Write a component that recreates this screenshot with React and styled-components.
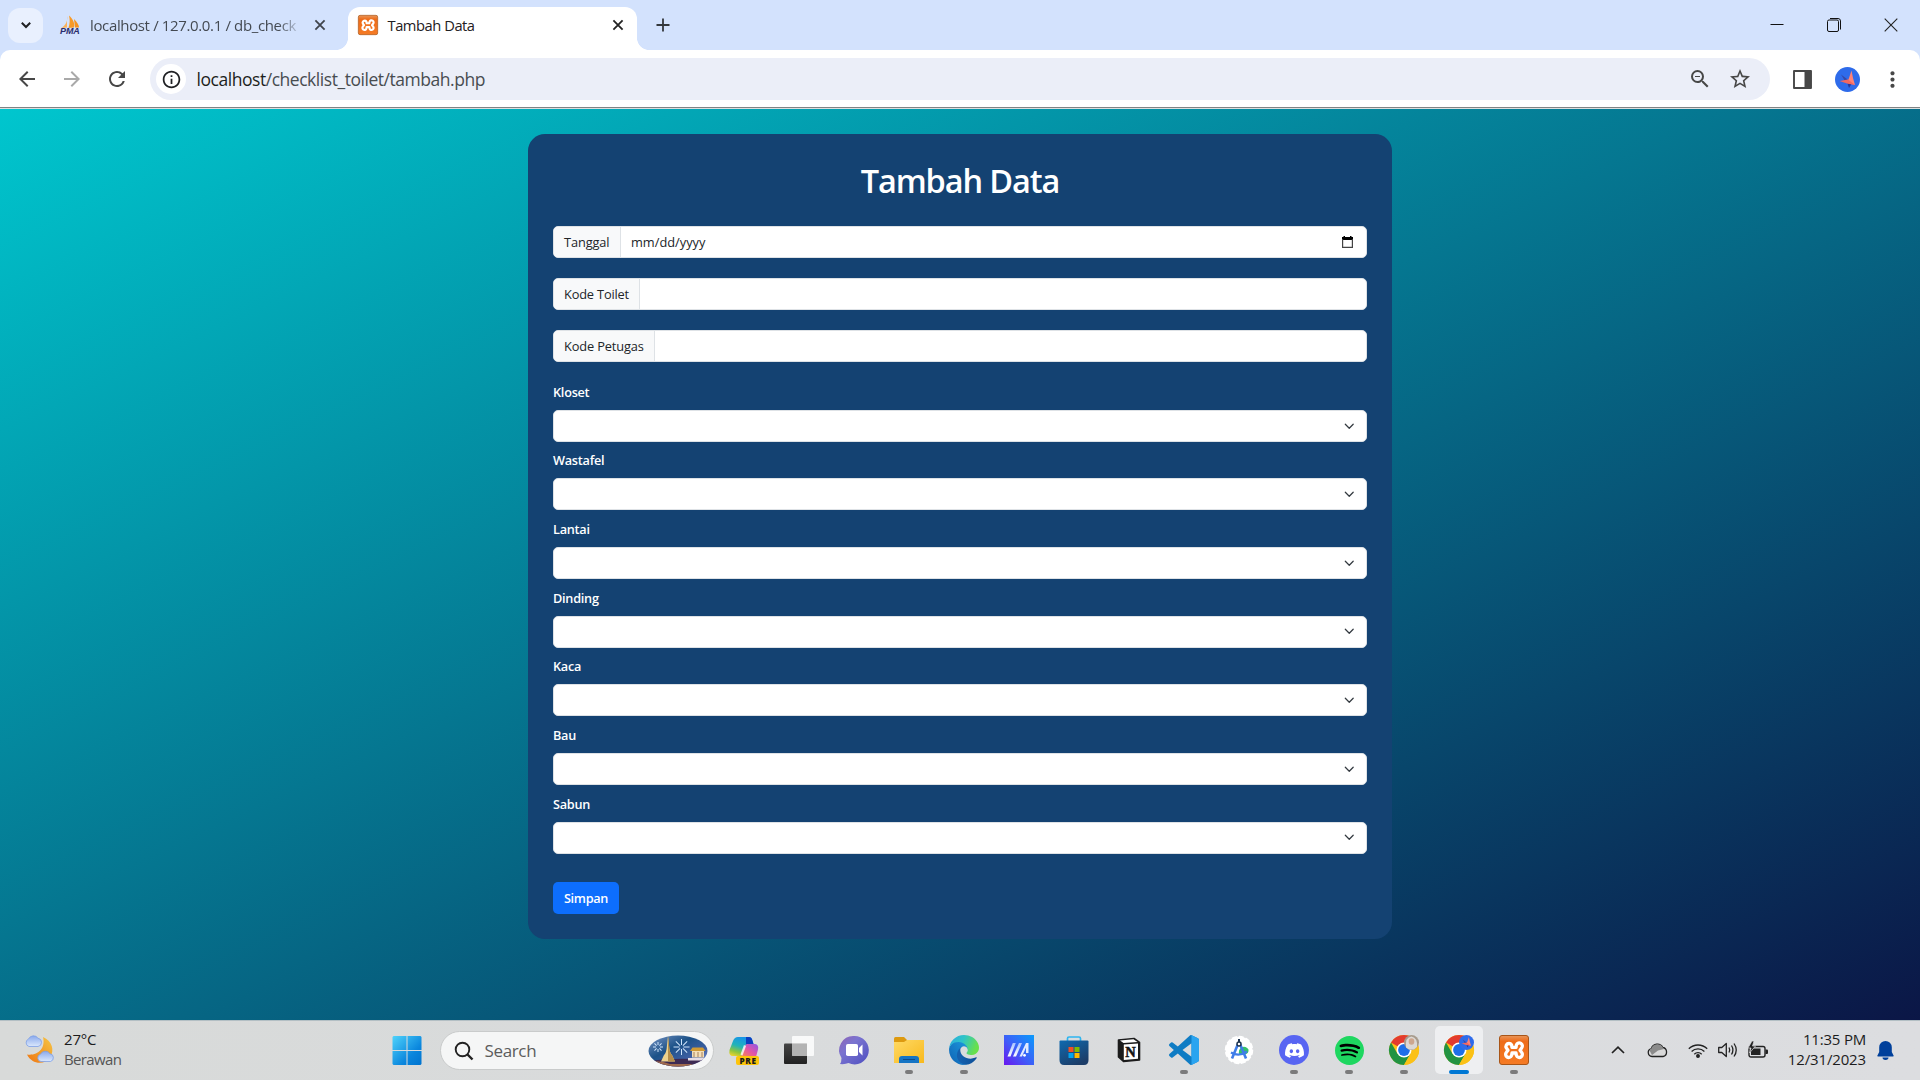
import React from "react";
import styled, { createGlobalStyle } from "styled-components";
import {
  MdArrowBack,
  MdArrowForward,
  MdRefresh,
  MdInfoOutline,
  MdZoomOut,
  MdStarBorder,
  MdMoreVert,
} from "react-icons/md";
import { SiDiscord, SiSpotify } from "react-icons/si";

const GlobalStyle = createGlobalStyle`
  * { box-sizing: border-box; }
  body { margin: 0; font-family: "Open Sans", "Noto Sans", sans-serif; }
  svg { display: block; flex: none; overflow: visible; }
`;

const Screen = styled.div`
  width: 1920px;
  height: 1080px;
  display: flex;
  flex-direction: column;
  overflow: hidden;
`;

/* ---------- browser chrome ---------- */
const TabStrip = styled.div`
  height: 50px;
  flex: none;
  display: flex;
  align-items: center;
  background: #d3e2fd;
  padding-left: 8px;
`;

const TabSearch = styled.div`
  width: 35px;
  height: 35px;
  border-radius: 12px;
  background: #e9f0fe;
  display: flex;
  align-items: center;
  justify-content: center;
`;

const Tab = styled.div`
  width: ${(p) => (p.$active ? 289 : 293)}px;
  height: ${(p) => (p.$active ? 43 : 50)}px;
  align-self: flex-end;
  display: flex;
  align-items: center;
  padding: ${(p) => (p.$active ? "0 13px 7px 10px" : "0 0 0 17px")};
  background: ${(p) => (p.$active ? "#fff" : "transparent")};
  border-radius: 12px 12px 0 0;
`;

const TabTitle = styled.div`
  margin-left: ${(p) => (p.$fade ? 10 : 9.5)}px;
  flex: none;
  width: ${(p) => p.$width}px;
  white-space: nowrap;
  font-size: ${(p) => (p.$fade ? 15 : 14.7)}px;
  line-height: 22px;
  letter-spacing: ${(p) => p.$spacing}px;
  color: ${(p) => (p.$fade ? "#444a52" : "#1f2023")};
  mask-image: ${(p) => (p.$fade ? "linear-gradient(90deg, #000 90%, rgba(0,0,0,.15))" : "none")};
`;

const TabClose = styled.div`
  margin-left: ${(p) => p.$gap}px;
  display: flex;
`;

const Spacer = styled.div`
  width: 12px;
  height: 12px;
`;

const Flare = styled.div`
  width: 12px;
  height: 12px;
  margin-left: ${(p) => (p.$left ? -12 : 0)}px;
  align-self: flex-end;
  background: radial-gradient(
    circle at ${(p) => (p.$left ? "0 0" : "100% 0")},
    transparent 11.6px,
    #fff 12.2px
  );
`;

const NewTab = styled.div`
  margin-left: 5.5px;
  display: flex;
`;

const WindowControls = styled.div`
  margin-left: auto;
  display: flex;
  align-items: center;
  gap: 43px;
  padding-right: 22px;
`;

const ToolbarBack = styled.div`
  flex: none;
  height: 59px;
  background: #d3e2fd;
  border-bottom: 1px solid #dcdfdf;
`;

const Toolbar = styled.div`
  height: 58px;
  background: #fff;
  border-radius: 10px 10px 0 0;
  border-bottom: 1px solid #808384;
  display: flex;
  align-items: center;
  padding: 1px 0 0 15px;
`;

const NavButtons = styled.div`
  display: flex;
  flex: none;
  gap: 21.2px;
  width: 135px;
  color: #474747;
`;

const NavIcon = styled.div`
  display: flex;
  justify-content: center;
  width: ${(p) => p.$width || p.$size || 24}px;
  font-size: ${(p) => p.$size || 24}px;
  color: ${(p) => (p.$muted ? "#a9a9a9" : "inherit")};
`;

const AddressBar = styled.div`
  width: 1620px;
  flex: none;
  height: 42px;
  border-radius: 21px;
  background: #ebeef8;
  display: flex;
  align-items: center;
  padding: 0 18px 0 6px;
`;

const SiteInfo = styled.div`
  width: 30px;
  height: 30px;
  border-radius: 50%;
  background: #fff;
  display: flex;
  align-items: center;
  justify-content: center;
  font-size: 21px;
  color: #1f2023;
`;

const Url = styled.div`
  flex: 1;
  margin-left: 10.5px;
  font-size: 17.5px;
  line-height: 24px;
  letter-spacing: -0.46px;
  color: #484c50;
  span { color: #1d1e20; }
`;

const AddressActions = styled.div`
  display: flex;
  gap: 16px;
  color: #474747;
`;

const ToolbarActions = styled.div`
  margin-left: 22.5px;
  flex: none;
  display: flex;
  align-items: center;
  gap: 23px;
  color: #474747;
`;

/* ---------- page ---------- */
const Page = styled.main`
  flex: none;
  height: 911px;
  padding-top: 25px;
  background: linear-gradient(to bottom right, #00c6ce 0%, #0b1646 100%);
`;

const Card = styled.section`
  width: 864px;
  height: 805px;
  margin: 0 auto;
  padding: 26px 25px 0;
  border-radius: 17px;
  background: #144272;
`;

const Title = styled.h1`
  margin: 0 0 24px;
  height: 42px;
  font-size: 32.5px;
  line-height: 42px;
  font-weight: 600;
  letter-spacing: -1.1px;
  text-align: center;
  color: #fff;
`;

const InputGroup = styled.div`
  display: flex;
  height: 32px;
  margin-bottom: 20px;
  border: 1px solid #dee2e6;
  border-radius: 5px;
  background: #fff;
  overflow: hidden;
`;

const Prefix = styled.label`
  width: ${(p) => p.$width}px;
  padding-left: 10px;
  border-right: 1px solid #dee2e6;
  background: #f8f9fa;
  font-size: 12.8px;
  line-height: 30px;
  letter-spacing: ${(p) => p.$spacing}px;
  white-space: nowrap;
  color: #212529;
`;

const FieldValue = styled.div`
  flex: 1;
  display: flex;
  align-items: center;
  justify-content: space-between;
  padding: 0 13px 0 10px;
  font-size: 12.8px;
  letter-spacing: 0;
  color: #212529;
`;

const SelectList = styled.div`
  padding-top: 0.8px;
`;

const SelectField = styled.div`
  height: 68.65px;
`;

const SelectLabel = styled.label`
  display: block;
  height: 27px;
  font-size: 12.7px;
  font-weight: 550;
  line-height: 19.4px;
  letter-spacing: -0.25px;
  color: #fff;
`;

const SelectBox = styled.div`
  height: 32px;
  border: 1px solid #dee2e6;
  border-radius: 5px;
  background: #fff;
  display: flex;
  align-items: center;
  justify-content: flex-end;
  padding-right: 11.5px;
`;

const SubmitButton = styled.button`
  margin-top: 18.6px;
  width: 66px;
  height: 32px;
  padding: 1px 0 0;
  border: 0;
  border-radius: 5px;
  background: #0d6efd;
  color: #fff;
  font-family: inherit;
  font-size: 12.7px;
  font-weight: 550;
  line-height: 19px;
  letter-spacing: -0.3px;
`;

/* ---------- taskbar ---------- */
const Taskbar = styled.footer`
  height: 60px;
  flex: none;
  display: flex;
  align-items: center;
  border-top: 1px solid #b3bfc4;
  background: linear-gradient(90deg, #d8dad9 0%, #d9dbdc 40%, #dcdde0 100%);
`;

const Weather = styled.div`
  width: 379.5px;
  padding: 0 0 2px 24px;
  display: flex;
  align-items: center;
  gap: 8px;
`;

const TwoLines = styled.div`
  padding-bottom: ${(p) => (p.$align ? 3 : 1)}px;
  font-size: 15px;
  line-height: 20px;
  color: #1c1c1c;
  text-align: ${(p) => p.$align || "left"};
`;

const Line = styled.div`
  letter-spacing: ${(p) => p.$spacing}px;
  color: ${(p) => (p.$muted ? "#555" : "inherit")};
`;

const SearchPill = styled.div`
  width: 274px;
  height: 39px;
  margin: 0 3px 0 5px;
  padding: 0 5px 0 13px;
  border: 1px solid #c9cbcb;
  border-radius: 20px;
  background: #f5f6f6;
  display: flex;
  align-items: center;
`;

const SearchText = styled.div`
  flex: 1;
  margin-left: 11px;
  font-size: 17px;
  letter-spacing: -0.35px;
  color: #5c5c5c;
`;

const AppCell = styled.div`
  width: 55px;
  height: 59px;
  display: flex;
  flex-direction: column;
  align-items: center;
`;

const AppTile = styled.div`
  width: 48px;
  height: 48px;
  margin-top: 5px;
  border-radius: 5px;
  display: flex;
  flex-direction: column;
  align-items: center;
  padding-top: 9px;
  background: ${(p) => (p.$active ? "#eeeff1" : "transparent")};
`;

const RunMark = styled.div`
  width: ${(p) => (p.$active ? 20 : 8)}px;
  height: 4px;
  margin-top: 5px;
  border-radius: 2px;
  background: ${(p) => (p.$active ? "#0078d4" : "#7b7b7c")};
`;

const Tray = styled.div`
  margin-left: auto;
  padding: 0 26px 1px 0;
  display: flex;
  align-items: center;
`;

const TrayIcon = styled.div`
  width: ${(p) => p.$width}px;
  display: flex;
  justify-content: center;
`;

const Clock = styled.div`
  width: 88.5px;
  margin-right: 11px;
`;

/* ---------- drawings ---------- */
const Cross = ({ size = 20, reach = 4.6, stroke = 1.8, color = "#222" }) => (
  <svg width={size} height={size} viewBox={`${-size / 2} ${-size / 2} ${size} ${size}`}>
    <path
      d={`M${-reach} ${-reach}L${reach} ${reach}M${reach} ${-reach}L${-reach} ${reach}`}
      stroke={color}
      strokeWidth={stroke}
    />
  </svg>
);

const PmaLogo = () => (
  <svg width="20" height="20" viewBox="0 0 20 20">
    <path d="M7 1C8 5 6 10 1.500 13L7 12.500Z" fill="#f9b15c" />
    <path d="M9 .5C13 4 15 8 14 12.500L8.500 13C10 8 10 5 9 .5Z" fill="#f89a27" />
    <path d="M14 4C17 7 19 10 19 12.500H15Z" fill="#f7931e" />
    <text x="0" y="19.400" fontFamily="Liberation Sans" fontWeight="700" fontStyle="italic" fontSize="9" fill="#2b2d6e" textLength="19.800">PMA</text>
  </svg>
);

const XamppLogo = ({ size = 30 }) => (
  <svg width={size} height={size} viewBox="0 0 30 30">
    <defs>
      <linearGradient id="xg" x1="0" y1="0" x2="0" y2="1">
        <stop offset="0" stopColor="#e8975c" />
        <stop offset=".2" stopColor="#ee6c19" />
        <stop offset="1" stopColor="#f57b25" />
      </linearGradient>
    </defs>
    <rect x=".5" y=".5" width="29" height="29" rx="2.500" fill="url(#xg)" stroke="#a85518" />
    <path
      d="M10 8.500a3 3 0 0 0-2.600 4.600L9 15.200 7.400 17.300A3.100 3.100 0 1 0 12.600 20.500L13 18h4l.4 2.500a3.100 3.100 0 1 0 5.200-3.200L21 15.200l1.600-2.100A3.100 3.100 0 1 0 17.400 9.900L17 12.400h-4L12.600 9.900A3 3 0 0 0 10 8.500Z"
      fill="none"
      stroke="#fff"
      strokeWidth="3.300"
      strokeLinejoin="round"
    />
  </svg>
);

const Avatar = ({ size = 25 }) => (
  <svg width={size} height={size} viewBox="0 0 25 25">
    <circle cx="12.500" cy="12.500" r="12.500" fill="#2e6bea" />
    <path d="M12 15L14 21L17 16Z" fill="#283a9c" />
    <path d="M6 7.500L12 12L13 15L10 14Z" fill="#3648a8" />
    <path d="M16.500 3.500L18 11L20 18L12 16L14 11Z" fill="#ff8276" />
    <path d="M4.500 14L13 12.500L20 18L12 16.500Z" fill="#f2685f" />
  </svg>
);

const WeatherIcon = () => (
  <svg width="32" height="30" viewBox="0 0 32 30">
    <defs>
      <linearGradient id="moon" x1="1" y1="0" x2="0" y2="1">
        <stop offset="0" stopColor="#f6c644" />
        <stop offset="1" stopColor="#ee7613" />
      </linearGradient>
      <linearGradient id="cl" x1="0" y1="0" x2="0" y2="1">
        <stop offset="0" stopColor="#8aa9ec" />
        <stop offset="1" stopColor="#dbe8fc" />
      </linearGradient>
    </defs>
    <path d="M19 2C28 6 31 15 26 22.500C21 30 8 30 3 19.500C13 21 22 14 19 2Z" fill="url(#moon)" />
    <path d="M5 11.500a4 4 0 0 1-.5-7.500A5.500 5.500 0 0 1 14 3.200a4.200 4.200 0 0 1 0 8.300Z" fill="url(#cl)" stroke="#7e9fe6" strokeWidth=".8" />
    <path d="M17 26.500a3.700 3.700 0 0 1-.6-7.200 5.500 5.500 0 0 1 9.600-.6 4 4 0 0 1 .5 7.800Z" fill="url(#cl)" stroke="#7e9fe6" strokeWidth=".8" />
  </svg>
);

const StartLogo = () => (
  <svg width="30" height="30" viewBox="0 0 30 30">
    <defs>
      <linearGradient id="win" x1="0" y1="0" x2="1" y2="1">
        <stop offset="0" stopColor="#4fd3fb" />
        <stop offset=".65" stopColor="#0a86dd" />
        <stop offset="1" stopColor="#0073cf" />
      </linearGradient>
    </defs>
    <path d="M1.500 1H14.500V15H.5V2ZM15.500 1H28.500L29.500 2V15H15.500ZM.5 16H14.500V30H1.500L.5 29ZM15.500 16H29.500V29L28.500 30H15.500Z" fill="url(#win)" />
  </svg>
);

const Burst = ({ x, y, r }) => (
  <g transform={`translate(${x} ${y})`} stroke="#cfe4fb" strokeWidth="1">
    {[0, 45, 90, 135].map((a) => (
      <path key={a} d={`M${-r} 0H-2M2 0H${r}`} transform={`rotate(${a})`} />
    ))}
  </g>
);

const SearchArt = () => (
  <svg width="60" height="32" viewBox="0 0 60 32">
    <defs>
      <linearGradient id="sky" x1="0" y1="0" x2="1" y2="1">
        <stop offset="0" stopColor="#7b97c6" />
        <stop offset=".4" stopColor="#1c5288" />
        <stop offset=".7" stopColor="#3f5fa3" />
        <stop offset="1" stopColor="#93a3d6" />
      </linearGradient>
      <clipPath id="oval"><ellipse cx="30" cy="16" rx="29.500" ry="15.500" /></clipPath>
    </defs>
    <g clipPath="url(#oval)">
      <rect width="60" height="32" fill="url(#sky)" />
      <path d="M0 26Q30 22 60 25V32H0Z" fill="#3d2a52" />
      <path d="M2 27Q12 25 22 29H45L40 32H2Z" fill="#a06a4c" />
      <path d="M40 23H60V25.500H40Z" fill="#e6dce4" />
    </g>
    <path d="M20 1L21 10Q21.500 18 24 20L27 26.500H13L16 20Q18.500 18 19 10Z" fill="#ecd28d" />
    <path d="M20 1L21 10Q21.500 18 24 20L27 26.500H20Z" fill="#b58e49" />
    <path d="M42 16L44.500 12.500H55L57.500 16Z" fill="#d09a35" />
    <path d="M44 16H56V22.500H44Z" fill="#f3dfb9" />
    <path d="M46 17V22M50 17V22M54 17V22" stroke="#a8805c" />
    <Burst x={10} y={12} r={5} />
    <Burst x={33.500} y={12} r={8} />
  </svg>
);

const Copilot = () => (
  <svg width="30" height="30" viewBox="0 0 30 30">
    <defs>
      <linearGradient id="cpa" x1=".5" y1="0" x2=".1" y2="1">
        <stop offset="0" stopColor="#1694e8" />
        <stop offset=".45" stopColor="#22b3b8" />
        <stop offset=".75" stopColor="#8fc53e" />
        <stop offset="1" stopColor="#f6d52c" />
      </linearGradient>
      <linearGradient id="cpb" x1="1" y1="0" x2="0" y2="1">
        <stop offset="0" stopColor="#8a56e8" />
        <stop offset=".5" stopColor="#e254a7" />
        <stop offset="1" stopColor="#fb8b4b" />
      </linearGradient>
    </defs>
    <path d="M9 2H20Q22.500 2 23.300 5L24.500 9H19Q16.500 9 15.500 12L12.500 21H4Q-.5 21 .5 15L4 6Q5.500 2 9 2Z" fill="url(#cpa)" />
    <path d="M17 2H20Q22.500 2 23.300 5L24.500 9H19Q17.800 9 17 10Z" fill="#0b3fc0" />
    <path d="M19 9H26Q30 9.500 29 14.500L27 22H12L15.500 12Q16.500 9 19 9Z" fill="url(#cpb)" />
    <path d="M16 10.500L12.500 20" stroke="#fff" strokeWidth="2.200" opacity=".8" />
    <rect x="7" y="21" width="23" height="9" rx="2" fill="#fdc50a" />
    <text x="10.500" y="28.500" fontFamily="Open Sans" fontWeight="800" fontSize="8.200" textLength="16.500" fill="#1b1b1b">PRE</text>
  </svg>
);

const TaskView = () => (
  <svg width="30" height="30" viewBox="0 0 30 30">
    <defs>
      <linearGradient id="tv" x1="0" y1="0" x2="0" y2="1">
        <stop offset="0" stopColor="#454545" /><stop offset="1" stopColor="#222" />
      </linearGradient>
    </defs>
    <rect x="0" y="8.500" width="23" height="20.500" rx="1" fill="url(#tv)" />
    <rect x="8" y="1" width="22" height="20" rx="1" fill="#fff" opacity=".82" />
    <path d="M8 8.500H23V21H8Z" fill="#a9a9a9" opacity=".8" />
  </svg>
);

const ChatIcon = () => (
  <svg width="30" height="30" viewBox="0 0 30 30">
    <defs>
      <linearGradient id="ch" x1="0" y1="0" x2="1" y2="1">
        <stop offset="0" stopColor="#8f62b4" />
        <stop offset=".35" stopColor="#7b74d0" />
        <stop offset="1" stopColor="#4d4ec0" />
      </linearGradient>
    </defs>
    <path d="M15 1A14.200 14.200 0 1 1 9.500 28Q6 29.500 1 29Q2.500 27 2.500 23A14.200 14.200 0 0 1 15 1Z" fill="url(#ch)" />
    <rect x="7" y="9" width="12" height="12" rx="1.800" fill="#fff" />
    <path d="M20 13L23.500 9.500V20.500L20 17Z" fill="#fff" />
  </svg>
);

const FolderIcon = () => (
  <svg width="30" height="30" viewBox="0 0 30 30">
    <defs>
      <linearGradient id="fd" x1="0" y1="0" x2="1" y2="1">
        <stop offset="0" stopColor="#ffd964" /><stop offset="1" stopColor="#f8b91d" />
      </linearGradient>
    </defs>
    <path d="M0 3.500Q0 2 1.500 2H10L13 5V10H0Z" fill="#dd9a10" />
    <path d="M0 7H10L13 5H30V28H0Z" fill="url(#fd)" />
    <path d="M5 28V24Q5 21 8 21H22Q25 21 25 24V28Z" fill="#1574c4" />
    <path d="M9 24.500H21" stroke="#0d4a8a" />
  </svg>
);

const EdgeIcon = () => (
  <svg width="30" height="30" viewBox="0 0 256 256">
    <defs>
      <linearGradient id="e1" x1=".2" y1="0" x2="1" y2="0">
        <stop offset="0" stopColor="#1560ae" /><stop offset="1" stopColor="#0d4f97" />
      </linearGradient>
      <linearGradient id="e2" x1="1" y1="0" x2="0" y2="1">
        <stop offset="0" stopColor="#1d9be0" /><stop offset="1" stopColor="#0f62b3" />
      </linearGradient>
      <linearGradient id="e3" x1="0" y1="0" x2="1" y2=".3">
        <stop offset="0" stopColor="#2aa9e0" /><stop offset=".5" stopColor="#2fc4c8" /><stop offset="1" stopColor="#68e04c" />
      </linearGradient>
    </defs>
    <path fill="url(#e1)" d="M231.070 190.540c-3.400 1.800-6.900 3.300-10.500 4.650a101.900 101.900 0 0 1-35.900 6.460c-47.300 0-88.500-32.540-88.500-74.320 0-11.440 6.380-22 16.630-27.500-42.800 1.800-53.800 46.400-53.800 72.500 0 73.880 68.100 81.370 82.760 81.370 7.900 0 19.840-2.300 27-4.560l1.300-.44a128.300 128.300 0 0 0 66.600-52.800 4 4 0 0 0-5.600-5.400z" />
    <path fill="url(#e2)" d="M105.730 241.420a79.200 79.200 0 0 1-22.740-21.340 80.700 80.700 0 0 1 29.800-120.190c3.130-1.470 8.460-4.130 15.560-4a32.350 32.350 0 0 1 25.690 13 31.900 31.900 0 0 1 6.360 18.660c0-.2 24.500-79.600-80.100-79.600-43.900 0-80 41.700-80 78.200a130.150 130.150 0 0 0 12.110 56 128 128 0 0 0 156.380 67.100 75.550 75.550 0 0 1-62.780-8z" />
    <path fill="url(#e3)" d="M152.330 148.860c-.8 1.050-3.300 2.500-3.300 5.660 0 2.600 1.700 5.120 4.720 7.230 14.380 10 41.500 8.680 41.560 8.680a59.560 59.560 0 0 0 30.270-8.350 61.400 61.400 0 0 0 30.400-52.900c.26-22.400-8-37.300-11.300-43.900C223.500 23.900 177.720 0 128 0A128 128 0 0 0 0 126.200c.48-36.500 36.800-66 80-66 3.500 0 23.460.34 42 10.070 16.340 8.580 24.900 18.940 30.850 29.200 6.180 10.680 7.280 24.200 7.280 29.600s-2.700 13.360-7.800 19.800z" />
  </svg>
);

const MyAsus = () => (
  <svg width="30" height="30" viewBox="0 0 30 30">
    <defs>
      <linearGradient id="ma" x1="1" y1="0" x2="0" y2="1">
        <stop offset="0" stopColor="#0a9bfb" />
        <stop offset=".55" stopColor="#3f5cf8" />
        <stop offset="1" stopColor="#6a16ee" />
      </linearGradient>
      <linearGradient id="mb" x1="0" y1="1" x2="0" y2="0">
        <stop offset="0" stopColor="#fff" />
        <stop offset="1" stopColor="#a9c3ff" />
      </linearGradient>
    </defs>
    <path d="M0 0H30V30H0Z" fill="url(#ma)" />
    <path d="M3.500 21.500L8.800 8H11.800L6.500 21.500Z" fill="url(#mb)" />
    <path d="M9 21.500L15 8H18L12 21.500Z" fill="url(#mb)" />
    <path d="M15.500 21.500L22 8H24.500V18H22V12.500L18 21.500Z" fill="#e1eaff" />
    <circle cx="20.500" cy="20.300" r="1.400" fill="#fff" />
  </svg>
);

const StoreIcon = () => (
  <svg width="30" height="30" viewBox="0 0 30 30">
    <defs>
      <linearGradient id="st" x1="0" y1="0" x2=".6" y2="1">
        <stop offset="0" stopColor="#0f6ab0" /><stop offset="1" stopColor="#1c3d68" />
      </linearGradient>
    </defs>
    <path d="M8.500 7V3.500Q8.500 2 10 2H20Q21.500 2 21.500 3.500V7" fill="none" stroke="#2fb5ef" strokeWidth="1.700" />
    <path d="M.5 6.500Q.5 5.500 1.500 5.500H28.500Q29.500 5.500 29.500 6.500V25Q29.500 30 25 30H5Q.5 30 .5 25Z" fill="url(#st)" />
    <path d="M9.500 12H14.500V17H9.500Z" fill="#f25022" />
    <path d="M15.500 12H20.500V17H15.500Z" fill="#7fba00" />
    <path d="M9.500 18H14.500V23H9.500Z" fill="#00a4ef" />
    <path d="M15.500 18H20.500V23H15.500Z" fill="#ffb900" />
  </svg>
);

const NotionIcon = () => (
  <svg width="30" height="30" viewBox="0 0 30 30">
    <path d="M4.500 5L20 3.500L25.500 7.500V25L9.500 26.500L4.500 22Z" fill="#1c1c1c" stroke="#1c1c1c" strokeWidth="1.600" strokeLinejoin="round" />
    <path d="M6 5.400L19.500 4.200L23.500 7L9.500 8Z" fill="#fff" />
    <path d="M9.800 9.500L24 8.500V23.700L9.800 24.900Z" fill="#fff" />
    <text x="11.200" y="21.800" fontFamily="Liberation Serif" fontWeight="700" fontSize="14.500" fill="#151515" stroke="#151515" strokeWidth=".5">N</text>
  </svg>
);

const CodeIcon = () => (
  <svg width="30" height="30" viewBox="0 0 24 24">
    <path fill="#0f7cc4" d="M23.150 2.587L18.210.21a1.494 1.494 0 0 0-1.705.29l-9.460 8.630-4.120-3.128a.999.999 0 0 0-1.276.057L.327 7.261A1 1 0 0 0 .326 8.740L3.899 12 .326 15.260a1 1 0 0 0 .001 1.479L1.650 17.940a.999.999 0 0 0 1.276.057l4.120-3.128 9.460 8.630a1.492 1.492 0 0 0 1.704.29l4.942-2.377A1.500 1.500 0 0 0 24 20.060V3.939a1.500 1.500 0 0 0-.85-1.352zm-5.146 14.861L10.826 12l7.178-5.448v10.896z" />
    <path fill="#2aa4f0" d="M18 .1L23.150 2.587A1.500 1.500 0 0 1 24 3.940V20.060A1.500 1.500 0 0 1 23.150 21.400L18 23.900Z" />
  </svg>
);

const AndroidStudio = () => (
  <svg width="30" height="30" viewBox="0 0 30 30">
    <circle cx="15" cy="15" r="13.500" fill="#fff" stroke="#fff" strokeWidth="1.500" strokeDasharray="5 2" />
    <path d="M15.500 19.500a5 5 0 0 1 9-5q.5 4-3.500 5Z" fill="#35c26b" />
    <path d="M13.800 9.500L8 23.500M16.200 9.500L22 23.500" stroke="#3f7de8" strokeWidth="2.600" />
    <path d="M7 17.500Q15 22 23 16.500" stroke="#3f7de8" strokeWidth="2.200" fill="none" />
    <circle cx="15" cy="9" r="2" fill="#fff" stroke="#1e3550" strokeWidth="1.500" />
    <path d="M15 4V7" stroke="#1e3550" strokeWidth="2" />
  </svg>
);

const DiscordBadge = styled.div`
  width: 30px;
  height: 30px;
  border-radius: 50%;
  background: #5865f2;
  color: #fff;
  font-size: 19px;
  display: flex;
  align-items: center;
  justify-content: center;
`;

const SpotifyBadge = styled.div`
  width: 30px;
  height: 30px;
  border-radius: 50%;
  background: radial-gradient(circle, #000 12px, transparent 12.5px);
  color: #1ed760;
  font-size: 29px;
  display: flex;
  align-items: center;
  justify-content: center;
`;

const ChromeIcon = ({ person }) => (
  <svg width="30" height="30" viewBox="0 0 30 30">
    <circle cx="15" cy="15" r="15" fill="#fbc116" />
    <path d="M15 15L2 7.500A15 15 0 0 1 28 7.500H15Z" fill="#e33b2e" />
    <path d="M2 7.500A15 15 0 0 0 15 30L21.500 18.750L15 15L8.500 18.750Z" fill="#229342" />
    <path d="M15 7.500H28A15 15 0 0 1 15 30L21.500 18.750Z" fill="#fbc116" />
    <circle cx="15" cy="15" r="7.500" fill="#fff" />
    <circle cx="15" cy="15" r="5.900" fill="#1f6fe8" />
    {person ? (
      <g>
        <circle cx="22.500" cy="7.500" r="7.500" fill="#a79b8c" />
        <path d="M17 12.500Q16 2 22.500 1.500Q29 3 28 12L25 14.600H20Z" fill="#dcd8d4" />
        <ellipse cx="22.500" cy="6.500" rx="2.800" ry="3.300" fill="#cda68e" />
      </g>
    ) : (
      <g transform="translate(15 0)"><Avatar size={15} /></g>
    )}
  </svg>
);

const CalendarIcon = () => (
  <svg width="11" height="12" viewBox="0 0 11 12">
    <path d="M0 1H11V4H0ZM1.500 0H3V1H1.500ZM8 0H9.500V1H8Z" fill="#000" />
    <path d="M.6 3V11.300H10.400V3" fill="none" stroke="#444" strokeWidth="1.200" />
  </svg>
);

const Chevron = () => (
  <svg width="10.500" height="10.500" viewBox="0 0 16 16">
    <path d="m2 5 6 6 6-6" fill="none" stroke="#343a40" strokeWidth="1.900" strokeLinecap="round" strokeLinejoin="round" />
  </svg>
);

const apps = [
  { id: "copilot", icon: <Copilot /> },
  { id: "views", icon: <TaskView /> },
  { id: "chat", icon: <ChatIcon /> },
  { id: "files", icon: <FolderIcon />, running: true },
  { id: "edge", icon: <EdgeIcon />, running: true },
  { id: "asus", icon: <MyAsus /> },
  { id: "store", icon: <StoreIcon /> },
  { id: "notion", icon: <NotionIcon /> },
  { id: "code", icon: <CodeIcon />, running: true },
  { id: "android", icon: <AndroidStudio /> },
  { id: "discord", icon: <DiscordBadge><SiDiscord /></DiscordBadge>, running: true },
  { id: "spotify", icon: <SpotifyBadge><SiSpotify /></SpotifyBadge>, running: true },
  { id: "chrome-a", icon: <ChromeIcon person />, running: true },
  { id: "chrome-b", icon: <ChromeIcon />, running: true, active: true },
  { id: "xampp", icon: <XamppLogo />, running: true },
];

const inputs = [
  { label: "Tanggal", width: 67, spacing: -0.12, date: true },
  { label: "Kode Toilet", width: 86, spacing: -0.17 },
  { label: "Kode Petugas", width: 101, spacing: -0.14 },
];

const selects = ["Kloset", "Wastafel", "Lantai", "Dinding", "Kaca", "Bau", "Sabun"];

export default function App() {
  return (
    <Screen>
      <GlobalStyle />
      <TabStrip>
        <TabSearch>
          <svg width="14" height="14" viewBox="0 0 14 14">
            <path d="M2.800 4.800L7 9L11.200 4.800" fill="none" stroke="#1f2023" strokeWidth="2" />
          </svg>
        </TabSearch>
        <Tab>
          <PmaLogo />
          <TabTitle $width={209} $spacing={-0.36} $fade>localhost / 127.0.0.1 / db_check</TabTitle>
          <TabClose $gap={11}><Cross color="#3f444b" /></TabClose>
        </Tab>
        <Spacer />
        <Flare $left />
        <Tab $active>
          <XamppLogo size={20} />
          <TabTitle $width={219.5} $spacing={-0.45}>Tambah Data</TabTitle>
          <TabClose $gap={0.5}><Cross /></TabClose>
        </Tab>
        <Flare />
        <NewTab>
          <svg width="16" height="16" viewBox="0 0 16 16">
            <path d="M8 1.500V14.500M1.500 8H14.500" stroke="#33373c" strokeWidth="1.800" />
          </svg>
        </NewTab>
        <WindowControls>
          <svg width="14" height="14" viewBox="0 0 14 14"><path d="M.5 6.500H13.500" stroke="#111" /></svg>
          <svg width="14" height="14" viewBox="0 0 14 14">
            <rect x=".5" y="2" width="11" height="11.500" rx="1.500" fill="none" stroke="#111" />
            <path d="M3 .5H11Q13.500 .5 13.500 3V11.500" fill="none" stroke="#111" />
          </svg>
          <Cross size={14} reach={6.3} stroke={1.1} />
        </WindowControls>
      </TabStrip>
      <ToolbarBack>
        <Toolbar>
          <NavButtons>
            <NavIcon><MdArrowBack /></NavIcon>
            <NavIcon $muted><MdArrowForward /></NavIcon>
            <NavIcon><MdRefresh /></NavIcon>
          </NavButtons>
          <AddressBar>
            <SiteInfo><MdInfoOutline /></SiteInfo>
            <Url><span>localhost</span>/checklist_toilet/tambah.php</Url>
            <AddressActions>
              <NavIcon $size={24}><MdZoomOut /></NavIcon>
              <NavIcon $size={24}><MdStarBorder /></NavIcon>
            </AddressActions>
          </AddressBar>
          <ToolbarActions>
            <svg width="19" height="19" viewBox="0 0 19 19">
              <path d="M1 1H18V18H1Z" fill="#fff" stroke="#474747" strokeWidth="1.900" strokeLinejoin="round" />
              <path d="M11.500 1H18V18H11.500Z" fill="#474747" />
            </svg>
            <Avatar />
            <NavIcon $size={25} $width={19}><MdMoreVert /></NavIcon>
          </ToolbarActions>
        </Toolbar>
      </ToolbarBack>

      <Page>
        <Card>
          <Title>Tambah Data</Title>
          {inputs.map((f) => (
            <InputGroup key={f.label}>
              <Prefix $width={f.width} $spacing={f.spacing}>{f.label}</Prefix>
              <FieldValue>
                {f.date && <span>mm/dd/yyyy</span>}
                {f.date && <CalendarIcon />}
              </FieldValue>
            </InputGroup>
          ))}
          <SelectList>
            {selects.map((s) => (
              <SelectField key={s}>
                <SelectLabel>{s}</SelectLabel>
                <SelectBox><Chevron /></SelectBox>
              </SelectField>
            ))}
          </SelectList>
          <SubmitButton type="button">Simpan</SubmitButton>
        </Card>
      </Page>

      <Taskbar>
        <Weather>
          <WeatherIcon />
          <TwoLines>
            <Line $spacing={-0.2}>27°C</Line>
            <Line $spacing={-0.65} $muted>Berawan</Line>
          </TwoLines>
        </Weather>
        <AppCell><AppTile><StartLogo /></AppTile></AppCell>
        <SearchPill>
          <svg width="20" height="20" viewBox="0 0 20 20">
            <circle cx="8.500" cy="8.500" r="6.800" fill="none" stroke="#222" strokeWidth="1.900" />
            <path d="M13.500 13.500L18.500 18.500" stroke="#222" strokeWidth="2.400" />
          </svg>
          <SearchText>Search</SearchText>
          <SearchArt />
        </SearchPill>
        {apps.map((a) => (
          <AppCell key={a.id}>
            <AppTile $active={a.active}>
              {a.icon}
              {a.running && <RunMark $active={a.active} />}
            </AppTile>
          </AppCell>
        ))}
        <Tray>
          <TrayIcon $width={40}>
            <svg width="14" height="8" viewBox="0 0 14 8"><path d="M1 7L7 1.200L13 7" fill="none" stroke="#222" strokeWidth="1.700" /></svg>
          </TrayIcon>
          <TrayIcon $width={40}>
            <svg width="21" height="16" viewBox="0 0 21 16">
              <path d="M5 14.500a4 4 0 0 1-.6-7.900A6.200 6.200 0 0 1 15.800 5.500a4.600 4.600 0 0 1 .2 9Z" fill="#d9d9d9" stroke="#222" strokeWidth="1.300" />
              <path d="M2.500 8.500Q3 6.800 4.400 6.600A6.200 6.200 0 0 1 15.800 5.500L17 7L11 8.500L5 13Z" fill="#8b8b8b" />
            </svg>
          </TrayIcon>
          <TrayIcon $width={40}>
            <svg width="20" height="15" viewBox="0 0 20 15" fill="none" stroke="#222" strokeWidth="1.300">
              <path d="M.8 5.800A13 13 0 0 1 19.200 5.800M3.600 8.500A9 9 0 0 1 16.400 8.500M6.300 11.200A5.300 5.300 0 0 1 13.700 11.200" />
              <circle cx="10" cy="13" r="1.300" fill="#222" />
            </svg>
          </TrayIcon>
          <TrayIcon $width={21}>
            <svg width="20" height="18" viewBox="0 0 20 18" fill="none" stroke="#222" strokeWidth="1.300">
              <path d="M.7 6.500V11.500H3.800L8.300 15.500V2.500L3.800 6.500Z" strokeLinejoin="round" />
              <path d="M11 6.500Q12.500 9 11 11.500M13.500 4.500Q16.300 9 13.500 13.500M16 2.500Q20.500 9 16 15.500" />
            </svg>
          </TrayIcon>
          <TrayIcon $width={39}>
            <svg width="20" height="17" viewBox="0 0 20 17">
              <rect x="1" y="4.500" width="16" height="10.500" rx="2" fill="none" stroke="#222" strokeWidth="1.400" />
              <path d="M3 13V6.500H12.500V13Z" fill="#222" />
              <path d="M17.500 7.500H19Q20 7.500 20 8.500V11Q20 12 19 12H17.500Z" fill="#222" />
              <path d="M4 -1L0 6H3L1.500 11L7.500 4H4.500L6 -1Z" fill="#222" stroke="#dcdde0" strokeWidth=".7" />
            </svg>
          </TrayIcon>
          <Clock>
            <TwoLines $align="right">
              <Line $spacing={-0.2}>11:35 PM</Line>
              <Line $spacing={-0.14}>12/31/2023</Line>
            </TwoLines>
          </Clock>
          <svg width="17" height="19" viewBox="0 0 17 19">
            <path d="M8.500 0A6.300 6.300 0 0 0 2.200 6.300V11L.3 14.700Q.2 15.500 1 15.500H16Q16.800 15.500 16.700 14.700L14.800 11V6.300A6.300 6.300 0 0 0 8.500 0ZM5.500 16.600H11.500A3 2.400 0 0 1 5.500 16.600Z" fill="#01409b" />
          </svg>
        </Tray>
      </Taskbar>
    </Screen>
  );
}
